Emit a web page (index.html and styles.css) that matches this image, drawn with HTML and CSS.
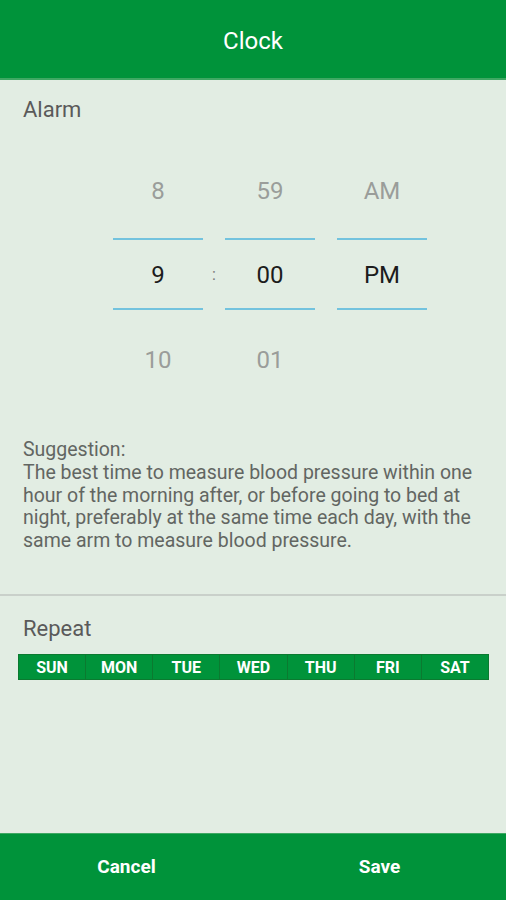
FILE: index.html
```html
<!DOCTYPE html>
<html>
<head>
    <title>Clock</title>
    <link rel="stylesheet" href="styles.css">
</head>
<body>
    <div class="screen">
        <div class="top-bar">Clock</div>

        <div class="content">
            <div class="section-label alarm-label">Alarm</div>

            <div class="picker">
                <div class="picker-col">
                    <div class="item item-prev">8</div>
                    <div class="item item-current">9</div>
                    <div class="item item-next">10</div>
                </div>
                <div class="colon">:</div>
                <div class="picker-col">
                    <div class="item item-prev">59</div>
                    <div class="item item-current">00</div>
                    <div class="item item-next">01</div>
                </div>
                <div class="spacer"></div>
                <div class="picker-col">
                    <div class="item item-prev">AM</div>
                    <div class="item item-current">PM</div>
                    <div class="item item-next"></div>
                </div>
            </div>

            <p class="suggestion">Suggestion:<br>The best time to measure blood pressure within one hour of the morning after, or before going to bed at night, preferably at the same time each day, with the same arm to measure blood pressure.</p>

            <hr class="divider">

            <div class="section-label repeat-label">Repeat</div>
            <div class="days">
                <div class="day">SUN</div>
                <div class="day">MON</div>
                <div class="day">TUE</div>
                <div class="day">WED</div>
                <div class="day">THU</div>
                <div class="day">FRI</div>
                <div class="day">SAT</div>
            </div>
        </div>

        <div class="bottom-bar">
            <div class="bottom-button">Cancel</div>
            <div class="bottom-button">Save</div>
        </div>
    </div>
</body>
</html>
```

FILE: styles.css
```css
body {
    margin: 0;
    font-family: Roboto, "Liberation Sans", sans-serif;
    background-color: #e2ede3;
}

.screen {
    height: 900px;
    display: flex;
    flex-direction: column;
}

.top-bar {
    height: 78px;
    line-height: 82px;
    background-color: #00933a;
    border-bottom: 2px solid #3fa863;
    color: white;
    font-size: 24px;
    text-align: center;
}

.content {
    flex: 1;
}

.section-label {
    padding: 0 23px;
    font-size: 22px;
    line-height: 26px;
    color: #5a5a5a;
}

.alarm-label {
    margin-top: 17px;
}

.picker {
    display: flex;
    margin-top: 33px;
    padding-left: 113px;
}

.picker-col {
    width: 90px;
    display: flex;
    flex-direction: column;
    text-align: center;
    font-size: 24px;
}

.item {
    height: 68px;
    line-height: 70px;
    color: #9a9d9a;
}

.item-prev {
    margin-bottom: 14px;
}

.item-current {
    color: #1c1c1c;
    border-top: 2px solid #73c3de;
    border-bottom: 2px solid #73c3de;
}

.item-next {
    margin-top: 15px;
}

.colon {
    width: 22px;
    margin-top: 84px;
    line-height: 70px;
    text-align: center;
    font-size: 16px;
    color: #7a7a7a;
}

.spacer {
    width: 22px;
}

.suggestion {
    margin: 46px 0 0;
    padding: 0 23px;
    font-size: 19.5px;
    line-height: 22.8px;
    color: #626662;
}

.divider {
    margin: 41px 0 0;
    border: none;
    border-top: 2px solid #c9d0ca;
}

.repeat-label {
    margin-top: 20px;
}

.days {
    display: flex;
    margin: 12px 17px 0 18px;
    background-color: #00933a;
    border: 1px solid #0b7a30;
}

.day {
    flex: 1;
    height: 24px;
    line-height: 26px;
    text-align: center;
    color: white;
    font-size: 16px;
    font-weight: bold;
    border-right: 1px solid #0b7a30;
}

.day:last-child {
    border-right: none;
}

.bottom-bar {
    height: 66px;
    display: flex;
    background-color: #00933a;
    border-top: 1px solid #3fa863;
}

.bottom-button {
    flex: 1;
    text-align: center;
    line-height: 66px;
    color: white;
    font-size: 19px;
    font-weight: bold;
}
```
